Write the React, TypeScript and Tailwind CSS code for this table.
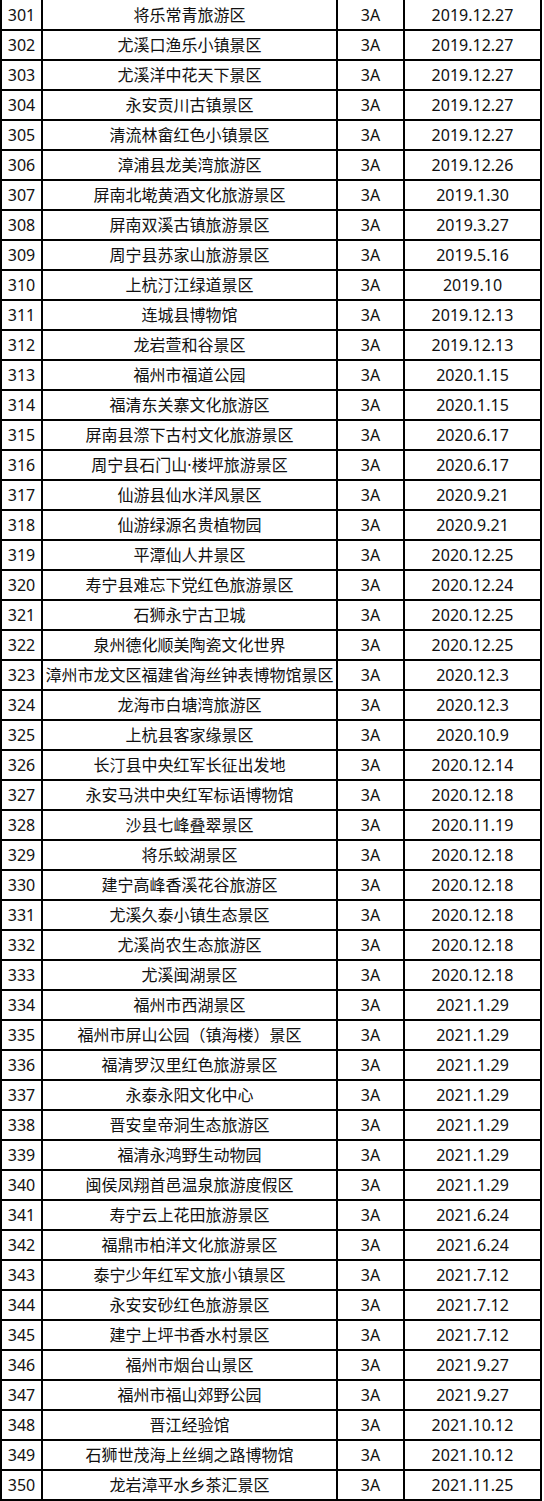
const rows: [number, string, string][] = [
  [301, '将乐常青旅游区', '2019.12.27'],
  [302, '尤溪口渔乐小镇景区', '2019.12.27'],
  [303, '尤溪洋中花天下景区', '2019.12.27'],
  [304, '永安贡川古镇景区', '2019.12.27'],
  [305, '清流林畲红色小镇景区', '2019.12.27'],
  [306, '漳浦县龙美湾旅游区', '2019.12.26'],
  [307, '屏南北墘黄酒文化旅游景区', '2019.1.30'],
  [308, '屏南双溪古镇旅游景区', '2019.3.27'],
  [309, '周宁县苏家山旅游景区', '2019.5.16'],
  [310, '上杭汀江绿道景区', '2019.10'],
  [311, '连城县博物馆', '2019.12.13'],
  [312, '龙岩萱和谷景区', '2019.12.13'],
  [313, '福州市福道公园', '2020.1.15'],
  [314, '福清东关寨文化旅游区', '2020.1.15'],
  [315, '屏南县漈下古村文化旅游景区', '2020.6.17'],
  [316, '周宁县石门山·楼坪旅游景区', '2020.6.17'],
  [317, '仙游县仙水洋风景区', '2020.9.21'],
  [318, '仙游绿源名贵植物园', '2020.9.21'],
  [319, '平潭仙人井景区', '2020.12.25'],
  [320, '寿宁县难忘下党红色旅游景区', '2020.12.24'],
  [321, '石狮永宁古卫城', '2020.12.25'],
  [322, '泉州德化顺美陶瓷文化世界', '2020.12.25'],
  [323, '漳州市龙文区福建省海丝钟表博物馆景区', '2020.12.3'],
  [324, '龙海市白塘湾旅游区', '2020.12.3'],
  [325, '上杭县客家缘景区', '2020.10.9'],
  [326, '长汀县中央红军长征出发地', '2020.12.14'],
  [327, '永安马洪中央红军标语博物馆', '2020.12.18'],
  [328, '沙县七峰叠翠景区', '2020.11.19'],
  [329, '将乐蛟湖景区', '2020.12.18'],
  [330, '建宁高峰香溪花谷旅游区', '2020.12.18'],
  [331, '尤溪久泰小镇生态景区', '2020.12.18'],
  [332, '尤溪尚农生态旅游区', '2020.12.18'],
  [333, '尤溪闽湖景区', '2020.12.18'],
  [334, '福州市西湖景区', '2021.1.29'],
  [335, '福州市屏山公园（镇海楼）景区', '2021.1.29'],
  [336, '福清罗汉里红色旅游景区', '2021.1.29'],
  [337, '永泰永阳文化中心', '2021.1.29'],
  [338, '晋安皇帝洞生态旅游区', '2021.1.29'],
  [339, '福清永鸿野生动物园', '2021.1.29'],
  [340, '闽侯凤翔首邑温泉旅游度假区', '2021.1.29'],
  [341, '寿宁云上花田旅游景区', '2021.6.24'],
  [342, '福鼎市柏洋文化旅游景区', '2021.6.24'],
  [343, '泰宁少年红军文旅小镇景区', '2021.7.12'],
  [344, '永安安砂红色旅游景区', '2021.7.12'],
  [345, '建宁上坪书香水村景区', '2021.7.12'],
  [346, '福州市烟台山景区', '2021.9.27'],
  [347, '福州市福山郊野公园', '2021.9.27'],
  [348, '晋江经验馆', '2021.10.12'],
  [349, '石狮世茂海上丝绸之路博物馆', '2021.10.12'],
  [350, '龙岩漳平水乡茶汇景区', '2021.11.25'],
];

export default function App() {
  return (
    <div className="bg-white w-[544px] min-h-[1501px]">
      <div
        className="w-[542px] border-x-2 border-black text-[16px] text-[#111] leading-none"
        style={{ fontFamily: '"Noto Sans", "Noto Sans CJK SC", sans-serif' }}
      >
        {rows.map(([no, name, date], i) => (
          <div
            key={no}
            className={`grid grid-cols-[41px_295px_67px_135px] border-b-2 border-black ${i === 0 ? 'h-[31px]' : 'h-[30px]'}`}
          >
            <div className="flex items-center justify-center border-r-2 border-black">{no}</div>
            <div className="flex items-center justify-center border-r-2 border-black whitespace-nowrap">{name}</div>
            <div className="flex items-center justify-center border-r-2 border-black">3A</div>
            <div className="flex items-center justify-center">{date}</div>
          </div>
        ))}
      </div>
    </div>
  );
}
